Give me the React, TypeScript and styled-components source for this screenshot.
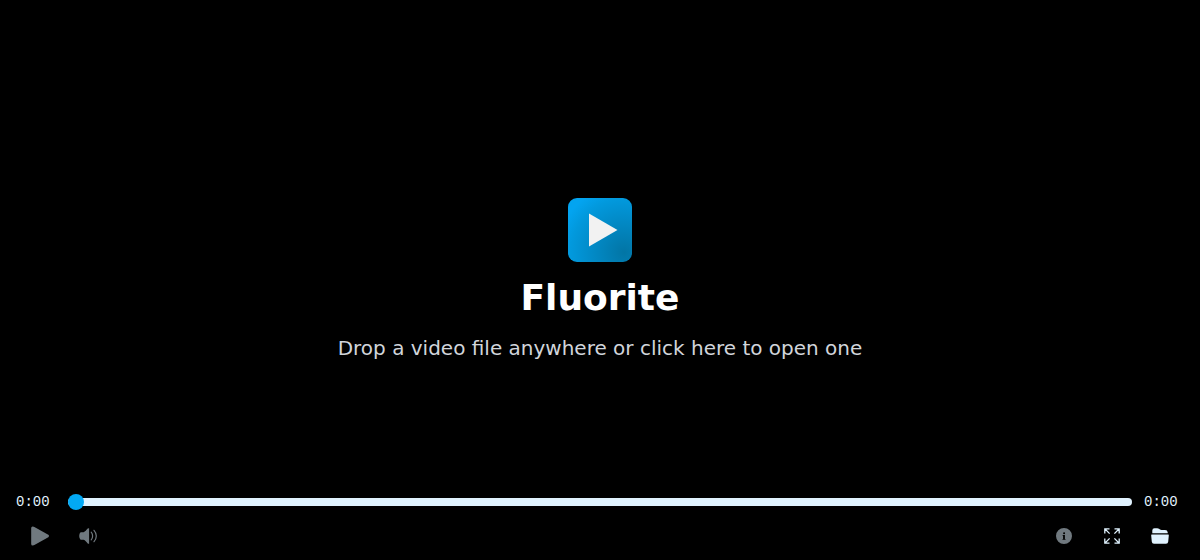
import React, { useState } from "react";
import styled, { createGlobalStyle } from "styled-components";

const GlobalStyle = createGlobalStyle`
  *, *::before, *::after { box-sizing: border-box; }
  body {
    margin: 0;
    background: #000;
    color: #e0f2fe;
    font-family: "DejaVu Sans", sans-serif;
  }
`;

const Player = styled.main`
  position: relative;
  display: flex;
  flex-direction: column;
  min-height: 100vh;
`;

const Welcome = styled.button`
  flex: 1;
  display: flex;
  flex-direction: column;
  align-items: center;
  justify-content: center;
  gap: 16px;
  padding: 0;
  border: 0;
  background: none;
  font-family: inherit;
  cursor: pointer;
`;

const Logo = styled.svg`
  display: block;
  width: 64px;
  height: 64px;
`;

const Title = styled.span`
  color: #fff;
  font-size: 36px;
  font-weight: 700;
  line-height: 40px;
`;

const Hint = styled.span`
  color: #d1d5db;
  font-size: 20px;
  line-height: 28px;
`;

const Controls = styled.footer`
  position: absolute;
  right: 0;
  bottom: 0;
  left: 0;
  padding: 0 16px;
`;

const Timeline = styled.div`
  display: flex;
  align-items: center;
  gap: 12px;
  height: 20px;
`;

const Time = styled.span`
  width: 40px;
  font-family: "Liberation Mono", monospace;
  font-size: 14px;
  line-height: 20px;
`;

const Seek = styled.input`
  flex: 1;
  min-width: 0;
  height: 8px;
  margin: 0;
  border-radius: 4px;
  background: #e0f2fe;
  appearance: none;
  cursor: pointer;

  &::-webkit-slider-thumb {
    width: 16px;
    height: 16px;
    border: 0;
    border-radius: 50%;
    background: #03a9f4;
    appearance: none;
  }
`;

const Toolbar = styled.div`
  display: flex;
  justify-content: space-between;
`;

const Group = styled.div`
  display: flex;
`;

const IconButton = styled.button`
  display: flex;
  align-items: center;
  justify-content: center;
  width: 48px;
  height: 48px;
  padding: 0;
  border: 0;
  background: none;
  color: #e0f2fe;
  cursor: pointer;

  &:disabled {
    opacity: 0.5;
    cursor: default;
  }
`;

const Icon = styled.svg`
  display: block;
  width: 24px;
  height: 24px;
  fill: currentColor;
`;

const PlayIcon = () => (
  <Icon viewBox="0 0 24 24" aria-hidden="true">
    <path d="M3.200 4V20Q3.200 21.600 4.800 21.500Q5.600 21.400 6.400 21L20.300 13.200Q21.700 12 20.300 10.800L6.400 3Q5.600 2.600 4.800 2.500Q3.200 2.400 3.200 4Z" />
  </Icon>
);

const VolumeIcon = () => (
  <Icon viewBox="0 0 24 24" aria-hidden="true">
    <path d="M4.600 8.200H7.600C9.200 8 10.400 5.800 11.700 4.600Q12.300 4.100 13.100 4.200V19.800Q12.300 19.900 11.700 19.400C10.400 18.200 9.200 16 7.600 15.800H4.600Q3.200 14.600 3.200 12T4.600 8.200Z" />
    <path
      d="M15.200 8.200Q16.600 9.700 16.600 12T15.200 15.800M18 6.300Q20.300 8.800 20.300 12T18 17.700"
      fill="none"
      stroke="currentColor"
      strokeWidth="1.2"
      strokeLinecap="round"
    />
  </Icon>
);

const InfoIcon = () => (
  <Icon viewBox="0 0 24 24" aria-hidden="true">
    <path
      fillRule="evenodd"
      d="M12 4A8 8 0 1 1 12 20A8 8 0 1 1 12 4ZM12.100 8.200A1 1 0 1 0 12.100 10.200A1 1 0 1 0 12.100 8.200ZM10.500 10.900V11.500L11.100 11.700V14.900L10.500 15.100V15.700H13.500V15.100L12.900 14.900V10.900Z"
    />
  </Icon>
);

const ExpandIcon = () => (
  <Icon viewBox="0 0 24 24" aria-hidden="true">
    <path
      d="M4.800 9.500V4.800H9.500M4.800 4.800L9.600 9.600M14.500 4.800H19.200V9.500M19.200 4.800L14.400 9.600M4.800 14.500V19.200H9.500M4.800 19.200L9.600 14.400M19.200 14.500V19.200H14.500M19.200 19.200L14.400 14.400"
      fill="none"
      stroke="currentColor"
      strokeWidth="1.3"
    />
  </Icon>
);

const FolderIcon = () => (
  <Icon viewBox="0 0 24 24" aria-hidden="true">
    <path d="M4.300 9.300V6.500Q4.300 4.200 6.500 4.200H9.200Q10.200 4.200 11 4.800L12 5.500Q12.600 5.900 13.500 5.900H17Q19.500 5.900 19.700 8.200V9.300Z" />
    <path d="M3.700 10.600H20.300Q20.900 10.700 20.800 11.500L20.200 17.700Q20 19.800 18 19.800H6Q4 19.800 3.800 17.700L3.200 11.500Q3.100 10.700 3.700 10.600Z" />
  </Icon>
);

export default function App() {
  const [position, setPosition] = useState(0);

  return (
    <Player>
      <GlobalStyle />
      <Welcome type="button">
        <Logo viewBox="0 0 64 64" aria-hidden="true">
          <defs>
            <radialGradient id="tile" cx="0.88" cy="0.85" r="1.05">
              <stop offset="0" stopColor="#0275a5" />
              <stop offset="0.5" stopColor="#028bc8" />
              <stop offset="0.8" stopColor="#0299dd" />
              <stop offset="1" stopColor="#03a4f0" />
            </radialGradient>
          </defs>
          <rect width="64" height="64" rx="9" fill="url(#tile)" />
          <path d="M21 15.500L49.500 32L21 48.500Z" fill="#f2f2f2" />
        </Logo>
        <Title>Fluorite</Title>
        <Hint>Drop a video file anywhere or click here to open one</Hint>
      </Welcome>
      <Controls>
        <Timeline>
          <Time>0:00</Time>
          <Seek
            type="range"
            aria-label="Seek"
            min={0}
            max={100}
            value={position}
            onChange={(e) => setPosition(Number(e.target.value))}
          />
          <Time>0:00</Time>
        </Timeline>
        <Toolbar>
          <Group>
            <IconButton type="button" aria-label="Play" disabled>
              <PlayIcon />
            </IconButton>
            <IconButton type="button" aria-label="Volume" disabled>
              <VolumeIcon />
            </IconButton>
          </Group>
          <Group>
            <IconButton type="button" aria-label="Video information" disabled>
              <InfoIcon />
            </IconButton>
            <IconButton type="button" aria-label="Full screen">
              <ExpandIcon />
            </IconButton>
            <IconButton type="button" aria-label="Open file">
              <FolderIcon />
            </IconButton>
          </Group>
        </Toolbar>
      </Controls>
    </Player>
  );
}
